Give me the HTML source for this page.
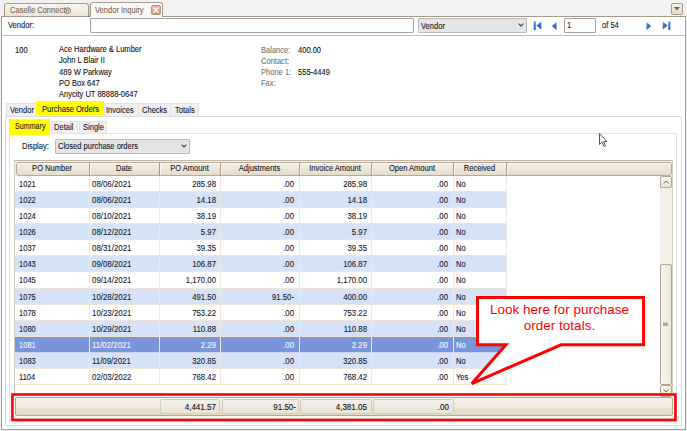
<!DOCTYPE html>
<html><head><meta charset="utf-8">
<style>
html,body{margin:0;padding:0}
body{width:687px;height:431px;overflow:hidden;position:relative;background:conic-gradient(#ededef 25%,#f6f6f6 0 50%,#ededef 0 75%,#f6f6f6 0) 0 0/2px 2px;font-family:"Liberation Sans",sans-serif;font-size:7.6px;color:#1c1c1c}
div,span{position:absolute;box-sizing:border-box}
.t{line-height:10px;white-space:nowrap;font-size:8.4px;transform:scaleX(.9);transform-origin:0 0;color:#111;-webkit-text-stroke:.1px currentColor}
.r{text-align:right;transform-origin:100% 0}
.c{text-align:center;transform-origin:50% 0}
.g{color:#767676}
</style></head><body>

<!-- top tabs -->
<div style="left:4px;top:3px;width:85px;height:14px;border:1px solid #a89a8b;border-bottom:none;border-radius:3px 3px 0 0;background:linear-gradient(#f8f5ee,#ebe4d6)"></div>
<div class="t" style="left:9.5px;top:5px;color:#7c6856">Caselle Connect</div>
<svg style="position:absolute;left:64px;top:6.6px" width="8" height="8" viewBox="0 0 8 8"><circle cx="3.6" cy="3.6" r="2.9" fill="none" stroke="#8a7866" stroke-width="1"/><path d="M2.6 5.4V1.9H3.9Q4.8 1.9 4.8 2.7Q4.8 3.5 3.9 3.5H2.6M3.9 3.5L4.9 5.4" fill="none" stroke="#8a7866" stroke-width=".7"/></svg>
<div style="left:90px;top:2px;width:73px;height:15px;border:1px solid #a89a8b;border-bottom:none;border-radius:3px 3px 0 0;background:#f9f9f9"></div>
<div class="t" style="left:95px;top:5px;color:#7c6856">Vendor Inquiry</div>
<div style="left:151px;top:5px;width:9.5px;height:10px;border:1px solid #ab9a8a;border-radius:2px;background:linear-gradient(#f4b0b0 0%,#ee9f9f 60%,#d99a62 62%,#d89860 100%)"></div>
<svg style="position:absolute;left:152px;top:6px" width="8" height="8" viewBox="0 0 8 8"><path d="M1.3 1.5L6.5 6.7M6.5 1.5L1.3 6.7" stroke="#fff" stroke-width="1.3" stroke-opacity=".95"/></svg>
<!-- drop btn -->
<div style="left:671px;top:3px;width:12px;height:12px;border:1px solid #a89a8b;border-radius:2px;background:linear-gradient(#f6f2ea,#e4dccb)"></div>
<svg style="position:absolute;left:674px;top:7px" width="6" height="4"><path d="M0 0H6L3 3.5Z" fill="#6e5f52"/></svg>

<!-- outer panel -->
<div style="left:1px;top:16px;width:685px;height:414px;border:1px solid #a89a8b;background:#fff"></div>
<div style="left:4px;top:15px;width:85px;height:2px;background:linear-gradient(#ebe4d6,#ebe4d6)"></div>
<div style="left:4px;top:15px;width:1px;height:1px;background:#a89a8b"></div>
<div style="left:88px;top:15px;width:1px;height:1px;background:#a89a8b"></div>
<div style="left:89px;top:4px;width:1px;height:12px;background:#d6cec4"></div>
<div style="left:2px;top:16px;width:2px;height:1px;background:#a89a8b"></div>
<div style="left:4px;top:16px;width:85px;height:1px;background:#a89a8b"></div>
<div style="left:91px;top:16px;width:71px;height:2px;background:#f9f9f9"></div>

<!-- vendor row -->
<div class="t" style="left:8px;top:20px;color:#14182e">Vendor:</div>
<div style="left:90px;top:18px;width:324px;height:15px;border:1px solid #a2a2a2;border-radius:1px;background:#fff"></div>
<div style="left:418px;top:18px;width:109px;height:15px;border:1px solid #bababa;border-radius:1px;background:#e5e5e5"></div>
<div class="t" style="left:421px;top:20.6px;color:#14182e">Vendor</div>
<svg style="position:absolute;left:518px;top:23px" width="6" height="4"><path d="M0.6 0.6L3 3L5.4 0.6" stroke="#3c3c46" stroke-width="1.1" fill="none"/></svg>
<!-- nav -->
<svg style="position:absolute;left:0;top:0" width="0" height="0"><defs><linearGradient id="nb" x1="0" y1="0" x2="0.3" y2="1"><stop offset="0" stop-color="#78a8ee"/><stop offset=".45" stop-color="#3a78d8"/><stop offset="1" stop-color="#2358c4"/></linearGradient></defs></svg>
<svg style="position:absolute;left:533px;top:21px" width="9" height="9" viewBox="0 0 9 9"><rect x="0.7" y="0.3" width="2" height="8.6" fill="url(#nb)"/><path d="M8.3 0.6V8.6L3.4 4.6Z" fill="url(#nb)"/></svg>
<svg style="position:absolute;left:551px;top:22px" width="6" height="8" viewBox="0 0 6 8"><path d="M5.5 0V8L0.8 4Z" fill="url(#nb)"/></svg>
<div style="left:564px;top:18px;width:32px;height:15px;border:1px solid #a2a2a2;border-radius:1px;background:#fff"></div>
<div class="t" style="left:567px;top:20px;color:#14182e">1</div>
<div class="t" style="left:602px;top:20px;color:#14182e">of 54</div>
<svg style="position:absolute;left:646px;top:22px" width="6" height="8" viewBox="0 0 6 8"><path d="M0.5 0V8L5.2 4Z" fill="url(#nb)"/></svg>
<svg style="position:absolute;left:662px;top:21px" width="9" height="9" viewBox="0 0 9 9"><path d="M0.7 0.6V8.6L5.6 4.6Z" fill="url(#nb)"/><rect x="6.3" y="0.3" width="2" height="8.6" fill="url(#nb)"/></svg>
<div style="left:2px;top:35px;width:683px;height:1px;background:#bdbdbd"></div>

<!-- vendor info -->
<div class="t" style="left:15px;top:45px">100</div>
<div class="t" style="left:59px;top:44px">Ace Hardware &amp; Lumber</div>
<div class="t" style="left:59px;top:55px">John L Blair II</div>
<div class="t" style="left:59px;top:66.5px">489 W Parkway</div>
<div class="t" style="left:59px;top:77.5px">PO Box 647</div>
<div class="t" style="left:59px;top:88.8px">Anycity UT 88888-0647</div>
<div class="t g" style="left:260.5px;top:45px">Balance:</div>
<div class="t g" style="left:260.5px;top:56px">Contact:</div>
<div class="t g" style="left:260.5px;top:67px">Phone 1:</div>
<div class="t g" style="left:260.5px;top:78px">Fax:</div>
<div class="t" style="left:298px;top:45px">400.00</div>
<div class="t" style="left:298px;top:67px">555-4449</div>

<!-- subtab panel -->
<div style="left:5px;top:116px;width:677px;height:310px;border:1px solid #dedede;background:#fff"></div>
<div style="left:6px;top:103px;width:31px;height:13px;border:1px solid #e2e2e2;border-bottom:none;background:#f0f0f0"></div>
<div class="t" style="left:9.5px;top:105px;color:#14182e">Vendor</div>
<div style="left:36px;top:101px;width:68px;height:14px;background:#ffff00"></div>
<div class="t" style="left:41.5px;top:104px;color:#14182e">Purchase Orders</div>
<div style="left:104px;top:103px;width:35px;height:13px;border:1px solid #e2e2e2;border-bottom:none;background:#f0f0f0"></div>
<div class="t" style="left:106px;top:105px;color:#14182e">Invoices</div>
<div style="left:138px;top:103px;width:33px;height:13px;border:1px solid #e2e2e2;border-bottom:none;background:#f0f0f0"></div>
<div class="t" style="left:142px;top:105px;color:#14182e">Checks</div>
<div style="left:170px;top:103px;width:29px;height:13px;border:1px solid #e2e2e2;border-bottom:none;background:#f0f0f0"></div>
<div class="t" style="left:174.5px;top:105px;color:#14182e">Totals</div>

<!-- summary panel -->
<div style="left:9px;top:133px;width:668px;height:289px;border:1px solid #e3e3e3;background:#fff"></div>
<div style="left:9px;top:119px;width:41px;height:16px;background:#ffff00"></div>
<div class="t" style="left:14.5px;top:121px;color:#14182e;transform:scaleX(.85)">Summary</div>
<div style="left:51px;top:121px;width:27px;height:12px;border:1px solid #e2e2e2;border-bottom:none;background:#f0f0f0"></div>
<div class="t" style="left:54px;top:122px;color:#14182e">Detail</div>
<div style="left:79px;top:121px;width:28px;height:12px;border:1px solid #e2e2e2;border-bottom:none;background:#f0f0f0"></div>
<div class="t" style="left:83px;top:122px;color:#14182e">Single</div>

<!-- display -->
<div class="t" style="left:21.7px;top:141px;color:#14182e">Display:</div>
<div style="left:55px;top:138.5px;width:135px;height:15px;border:1px solid #bababa;border-radius:1px;background:#e5e5e5"></div>
<div class="t" style="left:58px;top:141px;color:#14182e">Closed purchase orders</div>
<svg style="position:absolute;left:181px;top:144px" width="6" height="4"><path d="M0.6 0.6L3 3L5.4 0.6" stroke="#3c3c46" stroke-width="1.1" fill="none"/></svg>


<!-- grid -->
<div style="left:14px;top:160px;width:659px;height:235px;border:1px solid #d6cdbf;border-top-color:#c4b6a6;background:#fff"></div>
<div style="left:15px;top:161px;width:657px;height:15px;background:#f3efe6"></div>
<div style="left:16px;top:162px;width:656px;height:14px;border:1px solid #b6a999;border-radius:3px;background:linear-gradient(#fbf9f3 0,#fbf9f3 1px,#f2eee3 1px,#ece6d7 55%,#e5ddcb)"></div>
<div class="t c" style="left:15px;top:163px;width:74px;color:#14182e">PO Number</div>
<div class="t c" style="left:89px;top:163px;width:70px;color:#14182e">Date</div>
<div class="t c" style="left:159px;top:163px;width:61px;color:#14182e">PO Amount</div>
<div class="t c" style="left:220px;top:163px;width:79px;color:#14182e">Adjustments</div>
<div class="t c" style="left:299px;top:163px;width:72px;color:#14182e">Invoice Amount</div>
<div class="t c" style="left:371px;top:163px;width:82px;color:#14182e">Open Amount</div>
<div class="t c" style="left:453px;top:163px;width:53px;color:#14182e">Received</div>
<div style="left:89px;top:162px;width:1px;height:14px;background:#aa9b8a"></div>
<div style="left:90px;top:163px;width:1px;height:12px;background:#faf8f3"></div>
<div style="left:159px;top:162px;width:1px;height:14px;background:#aa9b8a"></div>
<div style="left:160px;top:163px;width:1px;height:12px;background:#faf8f3"></div>
<div style="left:220px;top:162px;width:1px;height:14px;background:#aa9b8a"></div>
<div style="left:221px;top:163px;width:1px;height:12px;background:#faf8f3"></div>
<div style="left:299px;top:162px;width:1px;height:14px;background:#aa9b8a"></div>
<div style="left:300px;top:163px;width:1px;height:12px;background:#faf8f3"></div>
<div style="left:371px;top:162px;width:1px;height:14px;background:#aa9b8a"></div>
<div style="left:372px;top:163px;width:1px;height:12px;background:#faf8f3"></div>
<div style="left:453px;top:162px;width:1px;height:14px;background:#aa9b8a"></div>
<div style="left:454px;top:163px;width:1px;height:12px;background:#faf8f3"></div>
<div style="left:506px;top:162px;width:1px;height:14px;background:#aa9b8a"></div>
<div style="left:507px;top:163px;width:1px;height:12px;background:#faf8f3"></div>
<div style="left:15px;top:176.00px;width:491px;height:16.08px;background:#ffffff;border-bottom:1px solid #ece6da"></div>
<div class="t" style="left:19px;top:179.00px;color:#14182e">1021</div>
<div class="t" style="left:92px;top:179.00px;color:#14182e;transform:scaleX(.94)">08/06/2021</div>
<div class="t r" style="left:135.5px;top:179.00px;width:80px;color:#14182e;transform:scaleX(.93)">285.98</div>
<div class="t r" style="left:214.2px;top:179.00px;width:80px;color:#14182e;transform:scaleX(.93)">.00</div>
<div class="t r" style="left:286.8px;top:179.00px;width:80px;color:#14182e;transform:scaleX(.93)">285.98</div>
<div class="t r" style="left:368.4px;top:179.00px;width:80px;color:#14182e;transform:scaleX(.93)">.00</div>
<div class="t" style="left:456.3px;top:179.00px;color:#14182e">No</div>
<div style="left:15px;top:192.08px;width:491px;height:16.08px;background:#d6e2f7;border-bottom:1px solid #ece6da"></div>
<div class="t" style="left:19px;top:195.08px;color:#14182e">1022</div>
<div class="t" style="left:92px;top:195.08px;color:#14182e;transform:scaleX(.94)">08/06/2021</div>
<div class="t r" style="left:135.5px;top:195.08px;width:80px;color:#14182e;transform:scaleX(.93)">14.18</div>
<div class="t r" style="left:214.2px;top:195.08px;width:80px;color:#14182e;transform:scaleX(.93)">.00</div>
<div class="t r" style="left:286.8px;top:195.08px;width:80px;color:#14182e;transform:scaleX(.93)">14.18</div>
<div class="t r" style="left:368.4px;top:195.08px;width:80px;color:#14182e;transform:scaleX(.93)">.00</div>
<div class="t" style="left:456.3px;top:195.08px;color:#14182e">No</div>
<div style="left:15px;top:208.16px;width:491px;height:16.08px;background:#ffffff;border-bottom:1px solid #ece6da"></div>
<div class="t" style="left:19px;top:211.16px;color:#14182e">1024</div>
<div class="t" style="left:92px;top:211.16px;color:#14182e;transform:scaleX(.94)">08/10/2021</div>
<div class="t r" style="left:135.5px;top:211.16px;width:80px;color:#14182e;transform:scaleX(.93)">38.19</div>
<div class="t r" style="left:214.2px;top:211.16px;width:80px;color:#14182e;transform:scaleX(.93)">.00</div>
<div class="t r" style="left:286.8px;top:211.16px;width:80px;color:#14182e;transform:scaleX(.93)">38.19</div>
<div class="t r" style="left:368.4px;top:211.16px;width:80px;color:#14182e;transform:scaleX(.93)">.00</div>
<div class="t" style="left:456.3px;top:211.16px;color:#14182e">No</div>
<div style="left:15px;top:224.24px;width:491px;height:16.08px;background:#d6e2f7;border-bottom:1px solid #ece6da"></div>
<div class="t" style="left:19px;top:227.24px;color:#14182e">1026</div>
<div class="t" style="left:92px;top:227.24px;color:#14182e;transform:scaleX(.94)">08/12/2021</div>
<div class="t r" style="left:135.5px;top:227.24px;width:80px;color:#14182e;transform:scaleX(.93)">5.97</div>
<div class="t r" style="left:214.2px;top:227.24px;width:80px;color:#14182e;transform:scaleX(.93)">.00</div>
<div class="t r" style="left:286.8px;top:227.24px;width:80px;color:#14182e;transform:scaleX(.93)">5.97</div>
<div class="t r" style="left:368.4px;top:227.24px;width:80px;color:#14182e;transform:scaleX(.93)">.00</div>
<div class="t" style="left:456.3px;top:227.24px;color:#14182e">No</div>
<div style="left:15px;top:240.32px;width:491px;height:16.08px;background:#ffffff;border-bottom:1px solid #ece6da"></div>
<div class="t" style="left:19px;top:243.32px;color:#14182e">1037</div>
<div class="t" style="left:92px;top:243.32px;color:#14182e;transform:scaleX(.94)">08/31/2021</div>
<div class="t r" style="left:135.5px;top:243.32px;width:80px;color:#14182e;transform:scaleX(.93)">39.35</div>
<div class="t r" style="left:214.2px;top:243.32px;width:80px;color:#14182e;transform:scaleX(.93)">.00</div>
<div class="t r" style="left:286.8px;top:243.32px;width:80px;color:#14182e;transform:scaleX(.93)">39.35</div>
<div class="t r" style="left:368.4px;top:243.32px;width:80px;color:#14182e;transform:scaleX(.93)">.00</div>
<div class="t" style="left:456.3px;top:243.32px;color:#14182e">No</div>
<div style="left:15px;top:256.40px;width:491px;height:16.08px;background:#d6e2f7;border-bottom:1px solid #ece6da"></div>
<div class="t" style="left:19px;top:259.40px;color:#14182e">1043</div>
<div class="t" style="left:92px;top:259.40px;color:#14182e;transform:scaleX(.94)">09/08/2021</div>
<div class="t r" style="left:135.5px;top:259.40px;width:80px;color:#14182e;transform:scaleX(.93)">106.87</div>
<div class="t r" style="left:214.2px;top:259.40px;width:80px;color:#14182e;transform:scaleX(.93)">.00</div>
<div class="t r" style="left:286.8px;top:259.40px;width:80px;color:#14182e;transform:scaleX(.93)">106.87</div>
<div class="t r" style="left:368.4px;top:259.40px;width:80px;color:#14182e;transform:scaleX(.93)">.00</div>
<div class="t" style="left:456.3px;top:259.40px;color:#14182e">No</div>
<div style="left:15px;top:272.48px;width:491px;height:16.08px;background:#ffffff;border-bottom:1px solid #ece6da"></div>
<div class="t" style="left:19px;top:275.48px;color:#14182e">1045</div>
<div class="t" style="left:92px;top:275.48px;color:#14182e;transform:scaleX(.94)">09/14/2021</div>
<div class="t r" style="left:135.5px;top:275.48px;width:80px;color:#14182e;transform:scaleX(.93)">1,170.00</div>
<div class="t r" style="left:214.2px;top:275.48px;width:80px;color:#14182e;transform:scaleX(.93)">.00</div>
<div class="t r" style="left:286.8px;top:275.48px;width:80px;color:#14182e;transform:scaleX(.93)">1,170.00</div>
<div class="t r" style="left:368.4px;top:275.48px;width:80px;color:#14182e;transform:scaleX(.93)">.00</div>
<div class="t" style="left:456.3px;top:275.48px;color:#14182e">No</div>
<div style="left:15px;top:288.56px;width:491px;height:16.08px;background:#d6e2f7;border-bottom:1px solid #ece6da"></div>
<div class="t" style="left:19px;top:291.56px;color:#14182e">1075</div>
<div class="t" style="left:92px;top:291.56px;color:#14182e;transform:scaleX(.94)">10/28/2021</div>
<div class="t r" style="left:135.5px;top:291.56px;width:80px;color:#14182e;transform:scaleX(.93)">491.50</div>
<div class="t r" style="left:214.2px;top:291.56px;width:80px;color:#14182e;transform:scaleX(.93)">91.50-</div>
<div class="t r" style="left:286.8px;top:291.56px;width:80px;color:#14182e;transform:scaleX(.93)">400.00</div>
<div class="t r" style="left:368.4px;top:291.56px;width:80px;color:#14182e;transform:scaleX(.93)">.00</div>
<div class="t" style="left:456.3px;top:291.56px;color:#14182e">No</div>
<div style="left:15px;top:304.64px;width:491px;height:16.08px;background:#ffffff;border-bottom:1px solid #ece6da"></div>
<div class="t" style="left:19px;top:307.64px;color:#14182e">1078</div>
<div class="t" style="left:92px;top:307.64px;color:#14182e;transform:scaleX(.94)">10/23/2021</div>
<div class="t r" style="left:135.5px;top:307.64px;width:80px;color:#14182e;transform:scaleX(.93)">753.22</div>
<div class="t r" style="left:214.2px;top:307.64px;width:80px;color:#14182e;transform:scaleX(.93)">.00</div>
<div class="t r" style="left:286.8px;top:307.64px;width:80px;color:#14182e;transform:scaleX(.93)">753.22</div>
<div class="t r" style="left:368.4px;top:307.64px;width:80px;color:#14182e;transform:scaleX(.93)">.00</div>
<div class="t" style="left:456.3px;top:307.64px;color:#14182e">No</div>
<div style="left:15px;top:320.72px;width:491px;height:16.08px;background:#d6e2f7;border-bottom:1px solid #ece6da"></div>
<div class="t" style="left:19px;top:323.72px;color:#14182e">1080</div>
<div class="t" style="left:92px;top:323.72px;color:#14182e;transform:scaleX(.94)">10/29/2021</div>
<div class="t r" style="left:135.5px;top:323.72px;width:80px;color:#14182e;transform:scaleX(.93)">110.88</div>
<div class="t r" style="left:214.2px;top:323.72px;width:80px;color:#14182e;transform:scaleX(.93)">.00</div>
<div class="t r" style="left:286.8px;top:323.72px;width:80px;color:#14182e;transform:scaleX(.93)">110.88</div>
<div class="t r" style="left:368.4px;top:323.72px;width:80px;color:#14182e;transform:scaleX(.93)">.00</div>
<div class="t" style="left:456.3px;top:323.72px;color:#14182e">No</div>
<div style="left:15px;top:336.80px;width:491px;height:16.08px;background:#7895db;border-bottom:1px solid #c9d3ee"></div>
<div class="t" style="left:19px;top:339.80px;color:#f4f6fc">1081</div>
<div class="t" style="left:92px;top:339.80px;color:#f4f6fc;transform:scaleX(.94)">11/02/2021</div>
<div class="t r" style="left:135.5px;top:339.80px;width:80px;color:#f4f6fc;transform:scaleX(.93)">2.29</div>
<div class="t r" style="left:214.2px;top:339.80px;width:80px;color:#f4f6fc;transform:scaleX(.93)">.00</div>
<div class="t r" style="left:286.8px;top:339.80px;width:80px;color:#f4f6fc;transform:scaleX(.93)">2.29</div>
<div class="t r" style="left:368.4px;top:339.80px;width:80px;color:#f4f6fc;transform:scaleX(.93)">.00</div>
<div class="t" style="left:456.3px;top:339.80px;color:#f4f6fc">No</div>
<div style="left:15px;top:352.88px;width:491px;height:16.08px;background:#d6e2f7;border-bottom:1px solid #ece6da"></div>
<div class="t" style="left:19px;top:355.88px;color:#14182e">1083</div>
<div class="t" style="left:92px;top:355.88px;color:#14182e;transform:scaleX(.94)">11/09/2021</div>
<div class="t r" style="left:135.5px;top:355.88px;width:80px;color:#14182e;transform:scaleX(.93)">320.85</div>
<div class="t r" style="left:214.2px;top:355.88px;width:80px;color:#14182e;transform:scaleX(.93)">.00</div>
<div class="t r" style="left:286.8px;top:355.88px;width:80px;color:#14182e;transform:scaleX(.93)">320.85</div>
<div class="t r" style="left:368.4px;top:355.88px;width:80px;color:#14182e;transform:scaleX(.93)">.00</div>
<div class="t" style="left:456.3px;top:355.88px;color:#14182e">No</div>
<div style="left:15px;top:368.96px;width:491px;height:16.08px;background:#ffffff;border-bottom:1px solid #ece6da"></div>
<div class="t" style="left:19px;top:371.96px;color:#14182e">1104</div>
<div class="t" style="left:92px;top:371.96px;color:#14182e;transform:scaleX(.94)">02/03/2022</div>
<div class="t r" style="left:135.5px;top:371.96px;width:80px;color:#14182e;transform:scaleX(.93)">768.42</div>
<div class="t r" style="left:214.2px;top:371.96px;width:80px;color:#14182e;transform:scaleX(.93)">.00</div>
<div class="t r" style="left:286.8px;top:371.96px;width:80px;color:#14182e;transform:scaleX(.93)">768.42</div>
<div class="t r" style="left:368.4px;top:371.96px;width:80px;color:#14182e;transform:scaleX(.93)">.00</div>
<div class="t" style="left:456.3px;top:371.96px;color:#14182e">Yes</div>
<div style="left:89px;top:176px;width:1px;height:209px;background:#efe9dd"></div>
<div style="left:159px;top:176px;width:1px;height:209px;background:#efe9dd"></div>
<div style="left:220px;top:176px;width:1px;height:209px;background:#efe9dd"></div>
<div style="left:299px;top:176px;width:1px;height:209px;background:#efe9dd"></div>
<div style="left:371px;top:176px;width:1px;height:209px;background:#efe9dd"></div>
<div style="left:453px;top:176px;width:1px;height:209px;background:#efe9dd"></div>
<div style="left:506px;top:176px;width:1px;height:209px;background:#efe9dd"></div>
<!-- scrollbar -->
<div style="left:660px;top:176px;width:12px;height:221px;background:#f3efe6"></div>
<div style="left:660px;top:176px;width:12px;height:12px;border:1px solid #b3a696;border-radius:2px;background:linear-gradient(#faf8f3,#ebe5d8)"></div>
<svg style="position:absolute;left:663px;top:180px" width="6" height="4"><path d="M0.5 3.5L3 1L5.5 3.5" stroke="#7a6a5c" stroke-width="1" fill="none"/></svg>
<div style="left:660px;top:264px;width:12px;height:121px;border:1px solid #b3a696;border-radius:2px;background:linear-gradient(90deg,#f7f4ec,#ece6d9)"></div>
<div style="left:663px;top:322px;width:5px;height:4px;background:#b3a597;border-top:1px solid #fff8"></div>
<div style="left:660px;top:385px;width:12px;height:12px;border:1px solid #b3a696;border-radius:2px;background:linear-gradient(#faf8f3,#ebe5d8)"></div>
<svg style="position:absolute;left:663px;top:389px" width="6" height="4"><path d="M0.5 0.5L3 3L5.5 0.5" stroke="#7a6a5c" stroke-width="1" fill="none"/></svg>

<!-- footer totals -->
<div style="left:15px;top:397px;width:658px;height:19px;border:1px solid #b3a696;border-radius:2px;background:linear-gradient(#f6f3eb,#efeadf 55%,#e8e1cf 58%,#e3dbc8)"></div>
<div style="left:160px;top:399px;width:60px;height:15px;border:1px solid #d5ccbd;border-radius:2px;background:linear-gradient(#f4f1ea,#e9e3d7)"></div>
<div style="left:222px;top:399px;width:77px;height:15px;border:1px solid #d5ccbd;border-radius:2px;background:linear-gradient(#f4f1ea,#e9e3d7)"></div>
<div style="left:300px;top:399px;width:72px;height:15px;border:1px solid #d5ccbd;border-radius:2px;background:linear-gradient(#f4f1ea,#e9e3d7)"></div>
<div style="left:373px;top:399px;width:81px;height:15px;border:1px solid #d5ccbd;border-radius:2px;background:linear-gradient(#f4f1ea,#e9e3d7)"></div>
<div class="t r" style="left:136.4px;top:401.5px;width:80px;transform:scaleX(.96)">4,441.57</div>
<div class="t r" style="left:216.2px;top:401.5px;width:80px;transform:scaleX(.96)">91.50-</div>
<div class="t r" style="left:287.3px;top:401.5px;width:80px;transform:scaleX(.96)">4,381.05</div>
<div class="t r" style="left:369px;top:401.5px;width:80px;transform:scaleX(.96)">.00</div>

<!-- red highlight rect -->
<svg style="position:absolute;left:0;top:0" width="687" height="431"><rect x="12.4" y="394.5" width="663" height="25.4" fill="none" stroke="#ff0000" stroke-width="2.6"/></svg>

<!-- callout -->
<svg style="position:absolute;left:0;top:0" width="687" height="431"><path d="M477.5 297.4H643.6V344.8H561L471.8 383.6L506 344.8H477.5Z" fill="#fff" stroke="#ff0000" stroke-width="3" stroke-linejoin="miter"/></svg>
<div style="left:476px;top:302px;width:167px;font-size:13.5px;line-height:16px;color:#ff0000;text-align:center;white-space:nowrap">Look here for purchase<br>order totals.</div>

<!-- cursor -->
<svg style="position:absolute;left:598px;top:132px" width="12" height="16" viewBox="0 0 12 16"><path d="M1.5 1.5V12.5L4 10L6 14.5L7.5 13.8L5.6 9.6H9Z" fill="#fff" stroke="#555" stroke-width="1" stroke-linejoin="round"/></svg>

</body></html>
